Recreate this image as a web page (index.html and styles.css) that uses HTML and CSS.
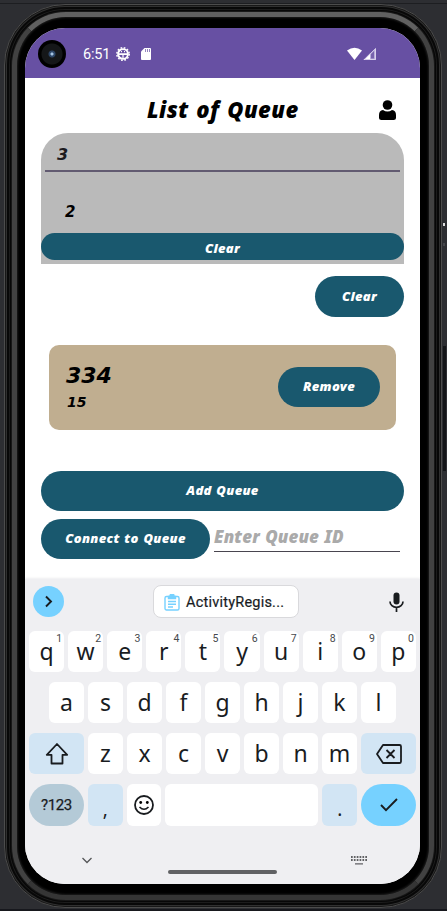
FILE: index.html
```html
<!DOCTYPE html>
<html lang="en">
<head>
<meta charset="utf-8">
<title>List of Queue</title>
<link rel="stylesheet" href="styles.css">
</head>
<body>
<div class="phone">
<div class="bezel">
<main class="screen">
  <header class="status">
    <span class="camera"></span>
    <span class="time">6:51</span>
    <svg class="debug" width="14" height="14" viewBox="0 0 14 14" fill="none" stroke="#fff"><circle cx="7" cy="7" r="4.900" stroke-width="1.900"/><circle cx="7" cy="7" r="6.200" stroke-width="1.500" stroke-dasharray="1.700 1.546"/><path d="M2 7.200h10" stroke-width="1.700"/><path d="M7 7v5M5 4.700h1M8 4.700h1" stroke-width="1.200"/></svg>
    <svg class="sd" width="10" height="12" viewBox="0 0 10 12"><path d="M3.500 0H9a1 1 0 0 1 1 1v10a1 1 0 0 1-1 1H1a1 1 0 0 1-1-1V3.500z" fill="#fff"/><path d="M4.500 1v3M6.500 1v3M8.500 1v3" stroke="#6750a3" stroke-width=".7"/></svg>
    <svg class="signal" width="30" height="14" viewBox="0 0 30 14"><path d="M0 3.500Q7.500-2 15 3.500L7.500 13z" fill="#fff"/><path d="M16.500 13L29 .8V13z" fill="#b9addb"/><path d="M16.500 13L23 6.600V13z" fill="#fff"/><path d="M17.500 12.500L28.500 1.800V12.500z" fill="none" stroke="#d8d0ea"/><path d="M24 7l3-3v7.500h-3z" fill="#7762ad"/></svg>
  </header>

  <section class="app">
    <div class="title">
      <h1>List of Queue</h1>
      <svg class="user" width="17" height="21" viewBox="0 0 17 21"><circle cx="8.500" cy="5" r="4.800"/><path d="M4 10q4.500 3 9 0 4 .7 4 5v2.500q0 2.500-2.500 2.500h-12Q0 20 0 17.500V15q0-4.300 4-5z"/></svg>
    </div>
    <div class="group">
      <div class="field"><span>3</span></div>
      <p class="count">2</p>
      <button class="btn slim">Clear</button>
    </div>
    <button class="btn clear">Clear</button>
    <article class="card">
      <div><h2>334</h2><p>15</p></div>
      <button class="btn remove">Remove</button>
    </article>
    <button class="btn add">Add Queue</button>
    <div class="connect">
      <button class="btn join">Connect to Queue</button>
      <div class="entry"><span>Enter Queue ID</span></div>
    </div>
  </section>

  <section class="keyboard">
    <div class="tools">
      <span class="expand"><svg width="31" height="31" viewBox="0 0 31 31"><path d="M13 10.500l5 5-5 5" fill="none" stroke="#191c1f" stroke-width="1.900"/></svg></span>
      <span class="clip"><svg width="16" height="17" viewBox="0 0 16 17" fill="none" stroke="#76d1ff" stroke-width="1.400"><rect x="1" y="2.500" width="14" height="13.500" rx="1.500"/><path d="M4 7.500h8M4 10.200h8M4 13h5"/><path d="M4.500 2.500h7v2h-7zM6 2a2 2 0 0 1 4 0" fill="#76d1ff"/></svg><span>ActivityRegis...</span></span>
      <svg class="mic" width="15" height="20" viewBox="0 0 15 20"><rect x="4.500" y="0.500" width="6" height="12" rx="3" fill="#191c1f"/><path d="M1 9.500a6.500 5.800 0 0 0 13 0M7.500 15.300V20" fill="none" stroke="#191c1f" stroke-width="1.700"/></svg>
    </div>
    <div class="row"><span class="key">q<sup>1</sup></span><span class="key">w<sup>2</sup></span><span class="key">e<sup>3</sup></span><span class="key">r<sup>4</sup></span><span class="key">t<sup>5</sup></span><span class="key">y<sup>6</sup></span><span class="key">u<sup>7</sup></span><span class="key">i<sup>8</sup></span><span class="key">o<sup>9</sup></span><span class="key">p<sup>0</sup></span></div>
    <div class="row home"><span class="key">a</span><span class="key">s</span><span class="key">d</span><span class="key">f</span><span class="key">g</span><span class="key">h</span><span class="key">j</span><span class="key">k</span><span class="key">l</span></div>
    <div class="row">
      <span class="key wide blue"><svg width="24" height="22" viewBox="0 0 24 22"><path d="M12 1L1.800 11.800H6.500V20.500H17.500V11.800H22.200z" fill="none" stroke="#191c1f" stroke-width="1.800" stroke-linejoin="round"/></svg></span>
      <span class="key">z</span><span class="key">x</span><span class="key">c</span><span class="key">v</span><span class="key">b</span><span class="key">n</span><span class="key">m</span>
      <span class="key wide blue"><svg width="26" height="20" viewBox="0 0 26 20" fill="none" stroke="#191c1f" stroke-width="1.800" stroke-linejoin="round"><path d="M7 1H23.500Q25 1 25 2.500V17.500Q25 19 23.500 19H7L1 10zM10.500 6l8 8M18.500 6l-8 8"/></svg></span>
    </div>
    <div class="row last">
      <span class="key wide symbols">?123</span>
      <span class="key blue punct">,</span>
      <span class="key"><svg width="20" height="20" viewBox="0 0 20 20"><circle cx="10" cy="10" r="9" fill="none" stroke="#191c1f" stroke-width="1.800"/><circle cx="6.700" cy="7.500" r="1.400"/><circle cx="13.300" cy="7.500" r="1.400"/><path d="M5.500 12q4.500 4.500 9 0" fill="none" stroke="#191c1f" stroke-width="1.600"/></svg></span>
      <span class="key space"></span>
      <span class="key blue punct">.</span>
      <span class="key wide enter"><svg width="18" height="14" viewBox="0 0 18 14"><path d="M1 7l5 5.200L17 1" fill="none" stroke="#191c1f" stroke-width="1.900"/></svg></span>
    </div>
    <nav class="nav">
      <svg width="10" height="7" viewBox="0 0 10 7"><path d="M.5 1L5 5.500 9.500 1" fill="none" stroke="#555658" stroke-width="1.300"/></svg>
      <span class="pill"></span>
      <svg width="16" height="9" viewBox="0 0 16 9" stroke="#606164"><path d="M0 1h16M0 4h16" stroke-width="2" stroke-dasharray="1.700 1.160"/><path d="M4 7.800h8" stroke-width="1.200"/></svg>
    </nav>
  </section>
</main>
</div>
</div>
<i class="side-button"></i>
<i class="side-mark"></i>
</body>
</html>
```
FILE: styles.css
```css
* { box-sizing: border-box; }
body { margin: 0; width: 447px; height: 911px; overflow: hidden; position: relative; background: linear-gradient(#2d2e32 3px, #1d1e21 3px, #1d1e21 4px, #2d2e32 4px, #2d2e32 909px, #17181d 909px); font-family: "Noto Sans", sans-serif; padding: 4px 0 0 4px; }
h1, h2, p { margin: 0; }
svg { display: block; flex: none; }
.phone { width: 438px; height: 904px; border-radius: 61px; padding: 7px; background: #060606; border: 1px solid #4c4c4c; box-shadow: inset 0 0 0 1px #171717, inset 0 0 0 2px #303030, inset 0 0 0 4px #080808, inset 0 0 0 5px #1c1c1c; }
.bezel { width: 422px; height: 888px; border-radius: 54px; background: #000; border: 5px solid #424242; border-top-color: #606060; border-bottom-color: #353535; padding: 11px 8px; box-shadow: 0 0 1px 1px #1b1b1b, inset 0 0 2px 1px #1c1c1c; }
.screen { width: 395px; height: 856px; border-radius: 40px; overflow: hidden; background: #fff; display: flex; flex-direction: column; }
.status { height: 50px; flex: none; background: #6750a3; display: flex; align-items: center; padding: 2px 43px 0 13px; color: #fff; }
.camera { width: 28px; height: 28px; border-radius: 50%; margin-right: 17px; background: radial-gradient(circle, #a5c5e3 0 1px, #2d4668 2px 3px, #151719 4px 10px, #000 11px); }
.time { width: 27px; font: 14.5px Roboto, sans-serif; letter-spacing: -.2px; }
.debug { margin-left: 6px; }
.sd { margin-left: 11px; }
.signal { margin-left: auto; }
.app { height: 501px; flex: none; padding: 0 16px; font-style: italic; font-weight: 900; display: flex; flex-direction: column; }
.title { height: 55px; flex: none; display: flex; justify-content: space-between; align-items: center; padding: 7px 8px 0 106px; }
h1 { font-size: 22px; line-height: 30px; font-weight: 900; white-space: nowrap; letter-spacing: .45px; word-spacing: 1.5px; }
.user { margin-top: 3px; }
.group { height: 131px; flex: none; background: #bababa; border-radius: 27px 27px 0 0; overflow: hidden; display: flex; flex-direction: column; }
.field { height: 39px; margin: 0 4px; padding: 10px 12px 0; border-bottom: 2px solid #625b71; font-family: "DejaVu Sans", sans-serif; font-size: 16px; line-height: 24px; color: #1c1b1f; }
.count { height: 61px; padding: 30px 0 0 24px; font-family: "DejaVu Sans", sans-serif; font-size: 15px; line-height: 20px; }
.btn { display: flex; align-items: center; justify-content: center; flex: none; padding: 0 0 2px; margin: 0; border: 0; border-radius: 21px; background: #19586e; color: #fff; height: 40px; font: italic 900 13px/18px "Noto Sans", sans-serif; letter-spacing: .3px; word-spacing: 1px; white-space: nowrap; }
.slim { height: 27px; padding: 3px 0 0; border-radius: 14px; }
.clear { align-self: flex-end; width: 89px; height: 41px; margin-top: 12px; }
.card { margin: 28px 8px 0; height: 85px; flex: none; border-radius: 10px; background: #c0ae90; display: flex; justify-content: space-between; padding: 16px 16px 0 17px; }
h2 { font-family: "DejaVu Sans", sans-serif; font-size: 22px; line-height: 30px; font-weight: 900; }
.card p { font-family: "DejaVu Sans", sans-serif; font-size: 14px; line-height: 20px; margin-top: 1px; padding-left: 1px; }
.remove { width: 102px; margin-top: 6px; }
.add { margin-top: 41px; }
.connect { display: flex; margin-top: 8px; }
.join { width: 169px; }
.entry { width: 186px; height: 33px; margin-left: 4px; padding-top: 5px; border-bottom: 1px solid #49454f; color: #aaa; font-size: 17px; line-height: 25px; letter-spacing: .1px; word-spacing: 1px; white-space: nowrap; }
.keyboard { flex: 1; padding: 0 4px; background: #efeff2; color: #191c1f; box-shadow: 0 -1px 2px #eeeef0; }
.tools { height: 53px; display: flex; align-items: center; padding: 0 12px 8px 4px; }
.expand { width: 31px; height: 31px; border-radius: 50%; background: #76d1ff; }
.clip { margin-left: 89px; width: 146px; height: 33px; border: 1px solid #d9d9dc; border-radius: 8px; background: #fff; display: flex; align-items: center; gap: 6px; padding: 1px 0 0 10px; font: 14.5px Roboto, sans-serif; letter-spacing: .22px; white-space: nowrap; -webkit-text-stroke: .2px #191c1f; }
.mic { margin-left: auto; }
.row { height: 41px; display: flex; gap: 4px; margin-bottom: 10px; }
.tools + .row { margin-top: -1px; }
.home { padding: 0 20px; }
.key { position: relative; flex: 1 1 0; background: #fff; border-radius: 6px; display: flex; align-items: center; justify-content: center; font: 23px/1 "Noto Sans", sans-serif; }
.key sup { position: absolute; right: 2px; top: 3px; font: 10.5px/10px Roboto, sans-serif; color: #46494c; }
.wide { flex: 0 0 55px; }
.blue { background: #d2e5f4; }
.last { height: 42px; margin-bottom: 0; }
.key.symbols { border-radius: 21px; background: #b4cad7; font: 15px Roboto, sans-serif; letter-spacing: -.4px; -webkit-text-stroke: .25px #191c1f; }
.punct { padding-top: 9px; font-size: 19px; }
.space { flex: 0 0 153px; }
.enter { border-radius: 21px; background: #76d1ff; }
.nav { display: flex; align-items: center; height: 58px; padding: 10px 49px 0 53px; }
.pill { width: 109px; height: 4px; border-radius: 2px; background: #606164; margin: 24px 74px 0 76px; }
.side-button { position: absolute; left: 443px; top: 346px; width: 3px; height: 125px; background: #141518; }
.side-mark { position: absolute; left: 443px; top: 223px; width: 2px; height: 3px; background: #ddd; box-shadow: 0 20px 0 #45464a; }
```
